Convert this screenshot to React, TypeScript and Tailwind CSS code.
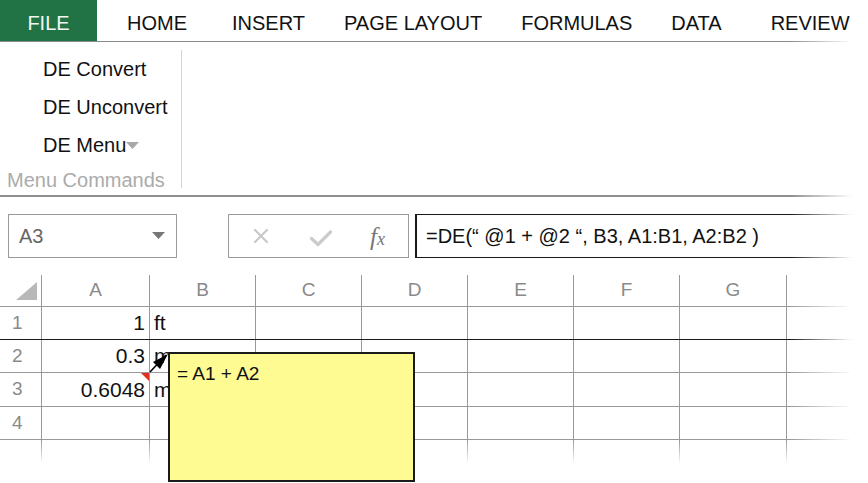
import React from "react";

const tabs: { label: string; ml: string }[] = [
  { label: "HOME", ml: "ml-[30px]" },
  { label: "INSERT", ml: "ml-[45px]" },
  { label: "PAGE LAYOUT", ml: "ml-[39px]" },
  { label: "FORMULAS", ml: "ml-[39px]" },
  { label: "DATA", ml: "ml-[39px]" },
  { label: "REVIEW", ml: "ml-[49px]" },
];

const colWidths = ["w-[108px]", "w-[106px]", "w-[106px]", "w-[106px]", "w-[106px]", "w-[106px]", "w-[107px]"];
const colLetters = ["A", "B", "C", "D", "E", "F", "G"];

const rows: { n: string; a: string; b: string; h: string; border: string }[] = [
  { n: "1", a: "1", b: "ft", h: "h-[33px]", border: "border-b border-b-[#1a1a1a]" },
  { n: "2", a: "0.3", b: "m", h: "h-[33px]", border: "border-b border-b-[#999]" },
  { n: "3", a: "0.6048", b: "m", h: "h-[34px]", border: "border-b border-b-[#999]" },
  { n: "4", a: "", b: "", h: "h-[33px]", border: "border-b border-b-[#999]" },
];

export default function App() {
  return (
    <div className="relative w-[868px] h-[483px] overflow-hidden bg-white text-[#111] font-['Liberation_Sans',Arial,sans-serif]">
      {/* Tabs */}
      <div className="flex h-[41px] items-center text-[20px]">
        <div className="flex h-full w-[97px] items-center justify-center bg-[#217346] pt-[4px] text-[#f0f7f2]">FILE</div>
        {tabs.map((t) => (
          <div key={t.label} className={`${t.ml} pt-[4px] whitespace-nowrap`}>
            {t.label}
          </div>
        ))}
      </div>
      <div className="h-px bg-[#8a8a8a]" />

      {/* Ribbon */}
      <div className="flex h-[153px]">
        <div className="flex w-[181px] flex-col pt-[8px] text-[20px]">
          <div className="flex h-[38px] items-center pl-[43px]">DE Convert</div>
          <div className="flex h-[38px] items-center pl-[43px]">DE Unconvert</div>
          <div className="flex h-[38px] items-center pl-[43px]">
            DE Menu
            <svg width="13" height="8" viewBox="0 0 13 8" className="mt-[1px]">
              <polygon points="0,0 13,0 6.5,7" fill="#a8a8a8" />
            </svg>
          </div>
          <div className="flex h-[31px] items-center pl-[7px] text-[#ababab]">Menu Commands</div>
        </div>
        <div className="mt-[8px] h-[138px] w-px bg-[#d4d4d4]" />
      </div>
      <div className="h-[2px] bg-[#8f8f8f]" />

      {/* Formula bar */}
      <div className="mt-[17px] flex h-[44px] items-stretch pl-[8px]">
        <div className="flex w-[169px] items-center justify-between border border-[#9a9a9a] pl-[10px] pr-[11px] text-[20px] text-[#666]">
          <span>A3</span>
          <svg width="13" height="8" viewBox="0 0 13 8">
            <polygon points="0,0 13,0 6.5,7" fill="#777" />
          </svg>
        </div>
        <div className="ml-[51px] flex w-[181px] items-center border border-[#9a9a9a] pl-[24px]">
          <svg width="16" height="16" viewBox="0 0 16 16">
            <path d="M2 2 L14 14 M14 2 L2 14" stroke="#c9c9c9" strokeWidth="2.2" strokeLinecap="round" />
          </svg>
          <svg width="22" height="18" viewBox="0 0 22 18" className="ml-[41px] mt-[3px]">
            <path d="M1.5 9.5 L8 15.5 L20.5 3" stroke="#cbcbcb" strokeWidth="3.2" fill="none" strokeLinejoin="round" strokeLinecap="round" />
          </svg>
          <span className="ml-[38px] font-['Liberation_Serif',serif] text-[25px] italic leading-none text-[#777]">
            f<span className="text-[18px]">x</span>
          </span>
        </div>
        <div className="ml-[6px] flex flex-1 items-center border border-l-2 border-[#1a1a1a] pl-[9px] text-[20px] whitespace-nowrap">
          =DE(“ @1 + @2 “, B3, A1:B1, A2:B2 )
        </div>
      </div>

      {/* Grid */}
      <div className="mt-[17px] text-[21px]">
        {/* header */}
        <div className="flex h-[32px] border-b border-[#999]">
          <div className="flex w-[42px] items-end justify-end border-r border-[#999] pb-[6px] pr-[4px]">
            <svg width="21" height="18" viewBox="0 0 21 18">
              <polygon points="21,0 21,18 0,18" fill="#b8b8b8" />
            </svg>
          </div>
          {colLetters.map((c, i) => (
            <div key={c} className={`${colWidths[i]} flex items-center justify-center border-r border-[#999] text-[19px] text-[#8a8a8a]`}>
              {c}
            </div>
          ))}
          <div className="flex-1" />
        </div>
        {rows.map((r) => (
          <div key={r.n} className={`flex ${r.h} ${r.border}`}>
            <div className="flex w-[42px] items-center border-r border-[#999] pl-[12px] text-[19px] text-[#8a8a8a]">{r.n}</div>
            <div className={`${colWidths[0]} flex items-center justify-end border-r border-[#999] pr-[4px]`}>{r.a}</div>
            <div className={`${colWidths[1]} flex items-center border-r border-[#999] pl-[4px]`}>{r.b}</div>
            {colWidths.slice(2).map((w, i) => (
              <div key={i} className={`${w} border-r border-[#999]`} />
            ))}
            <div className="flex-1" />
          </div>
        ))}
        {/* trailing fading row */}
        <div className="flex h-[24px]">
          <div className="flex w-[42px] justify-end">
            <div className="h-full w-px bg-linear-to-b from-[#999] to-white" />
          </div>
          {colWidths.map((w, i) => (
            <div key={i} className={`${w} flex justify-end`}>
              <div className="h-full w-px bg-linear-to-b from-[#999] to-white" />
            </div>
          ))}
        </div>
      </div>

      {/* right-edge fade */}
      <div className="pointer-events-none absolute bottom-0 left-[790px] right-0 top-[38px] bg-linear-to-r from-transparent to-white to-80%" />

      {/* comment indicator */}
      <svg className="absolute left-[141px] top-[373px]" width="8" height="8" viewBox="0 0 8 8">
        <polygon points="0,0 8,0 8,8" fill="#e0301e" />
      </svg>

      {/* comment arrow */}
      <svg className="absolute left-[148px] top-[350px]" width="24" height="26" viewBox="0 0 24 26">
        <line x1="2" y1="22" x2="18" y2="5" stroke="#000" strokeWidth="1.6" />
        <polygon points="20,4 5,12 12,19" fill="#000" />
      </svg>

      {/* comment note */}
      <div className="absolute left-[168px] top-[352px] h-[130px] w-[247px] border-2 border-[#1a1a1a] bg-[#fffb93] pl-[7px] pt-[6px] text-[19px]">
        = A1 + A2
      </div>
    </div>
  );
}
